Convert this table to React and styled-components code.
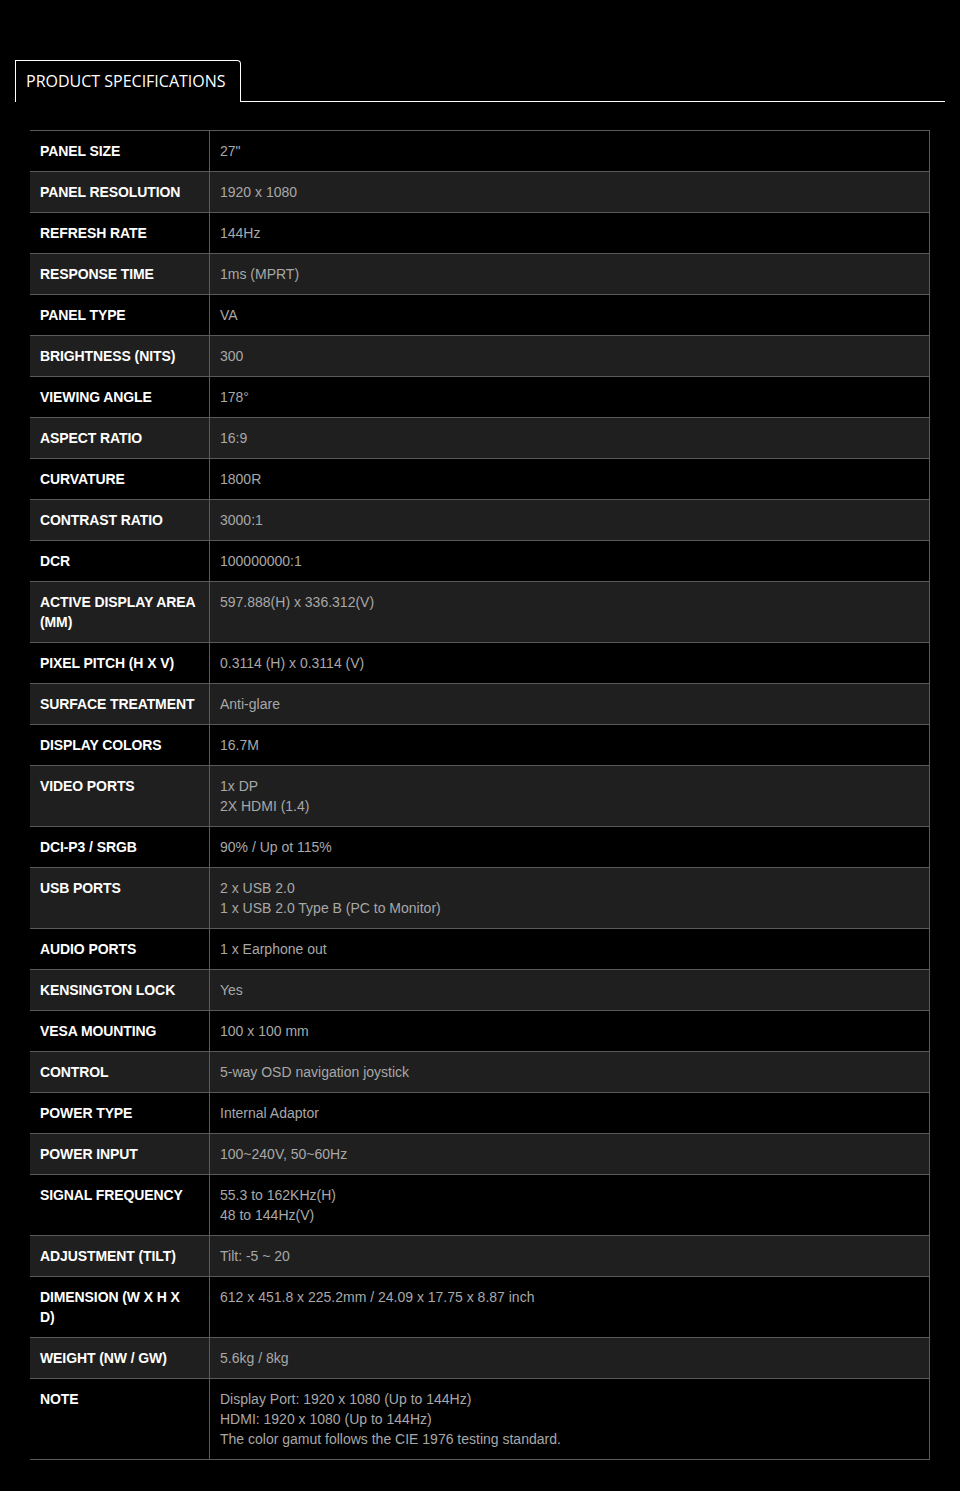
import styled, { createGlobalStyle } from "styled-components";

const specs = [
  ["PANEL SIZE", ['27"']],
  ["PANEL RESOLUTION", ["1920 x 1080"]],
  ["REFRESH RATE", ["144Hz"]],
  ["RESPONSE TIME", ["1ms (MPRT)"]],
  ["PANEL TYPE", ["VA"]],
  ["BRIGHTNESS (NITS)", ["300"]],
  ["VIEWING ANGLE", ["178°"]],
  ["ASPECT RATIO", ["16:9"]],
  ["CURVATURE", ["1800R"]],
  ["CONTRAST RATIO", ["3000:1"]],
  ["DCR", ["100000000:1"]],
  ["ACTIVE DISPLAY AREA (MM)", ["597.888(H) x 336.312(V)"]],
  ["PIXEL PITCH (H X V)", ["0.3114 (H) x 0.3114 (V)"]],
  ["SURFACE TREATMENT", ["Anti-glare"]],
  ["DISPLAY COLORS", ["16.7M"]],
  ["VIDEO PORTS", ["1x DP", "2X HDMI (1.4)"]],
  ["DCI-P3 / SRGB", ["90% / Up ot 115%"]],
  ["USB PORTS", ["2 x USB 2.0", "1 x USB 2.0 Type B (PC to Monitor)"]],
  ["AUDIO PORTS", ["1 x Earphone out"]],
  ["KENSINGTON LOCK", ["Yes"]],
  ["VESA MOUNTING", ["100 x 100 mm"]],
  ["CONTROL", ["5-way OSD navigation joystick"]],
  ["POWER TYPE", ["Internal Adaptor"]],
  ["POWER INPUT", ["100~240V, 50~60Hz"]],
  ["SIGNAL FREQUENCY", ["55.3 to 162KHz(H)", "48 to 144Hz(V)"]],
  ["ADJUSTMENT (TILT)", ["Tilt: -5 ~ 20"]],
  ["DIMENSION (W X H X D)", ["612 x 451.8 x 225.2mm / 24.09 x 17.75 x 8.87 inch"]],
  ["WEIGHT (NW / GW)", ["5.6kg / 8kg"]],
  [
    "NOTE",
    [
      "Display Port: 1920 x 1080 (Up to 144Hz)",
      "HDMI: 1920 x 1080 (Up to 144Hz)",
      "The color gamut follows the CIE 1976 testing standard.",
    ],
  ],
];

const App = () => {
  return (
    <>
      <GlobalStyle />
      <Page>
        <TabBar>
          <Tab>PRODUCT SPECIFICATIONS</Tab>
          <TabLine />
        </TabBar>

        <Table>
          <tbody>
            {specs.map(([label, lines], i) => (
              <Row key={label} $alt={i % 2 === 1}>
                <Label>{label}</Label>
                <Value>
                  {lines.map((line) => (
                    <div key={line}>{line}</div>
                  ))}
                </Value>
              </Row>
            ))}
          </tbody>
        </Table>
      </Page>
    </>
  );
};

export default App;

// styled-components
const GlobalStyle = createGlobalStyle`
  html, body {
    margin: 0;
    padding: 0;
    background: #000000;
  }
`;

const Page = styled.div`
  width: 960px;
  min-height: 1491px;
  padding: 60px 15px 0 15px;
  box-sizing: border-box;
  background: #000000;
`;

const TabBar = styled.div`
  display: flex;
  align-items: flex-end;
  width: 930px;
`;

const Tab = styled.div`
  width: 226px;
  height: 42px;
  box-sizing: border-box;
  padding: 0 0 1px 10px;
  display: flex;
  align-items: center;
  border: 1px solid #ffffff;
  border-bottom: none;
  border-top-right-radius: 4px;
  color: #ffffff;
  font-family: "Open Sans", "Liberation Sans", sans-serif;
  font-size: 16px;
  letter-spacing: 0;
  white-space: nowrap;
`;

const TabLine = styled.div`
  flex: 1;
  border-bottom: 1px solid #ffffff;
`;

const Table = styled.table`
  margin: 28px 0 0 15px;
  width: 900px;
  border-collapse: collapse;
  border-top: 1px solid #5a5a5a;
  border-right: 1px solid #5a5a5a;
  font-family: "Liberation Sans", Arial, sans-serif;
  font-size: 14px;
  line-height: 20px;
`;

const Row = styled.tr`
  background: ${(p) => (p.$alt ? "#1f1f1f" : "#000000")};
  border-bottom: 1px solid #5a5a5a;
`;

const Label = styled.td`
  width: 157px;
  padding: 10px 12px 10px 10px;
  vertical-align: top;
  color: #ffffff;
  font-weight: bold;
  letter-spacing: -0.1px;
  border-right: 1px solid #5a5a5a;
`;

const Value = styled.td`
  padding: 10px 10px 10px 10px;
  vertical-align: top;
  color: #a8a8a8;
`;
